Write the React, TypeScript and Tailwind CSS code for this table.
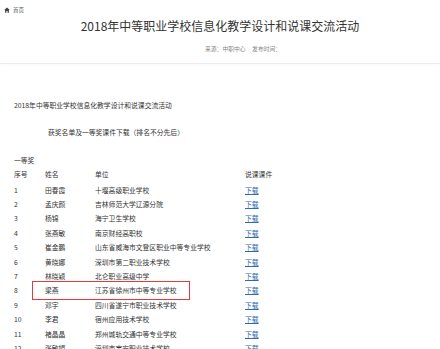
import React from "react";

const rows: [string, string, string][] = [
  ["1", "田春霞", "十堰高级职业学校"],
  ["2", "孟庆颜", "吉林师范大学辽源分院"],
  ["3", "杨锦", "海宁卫生学校"],
  ["4", "张燕敏", "南京财经高职校"],
  ["5", "崔金鹏", "山东省威海市文登区职业中等专业学校"],
  ["6", "黄晓娜", "深圳市第二职业技术学校"],
  ["7", "林晓颖", "北仑职业高级中学"],
  ["8", "梁燕", "江苏省徐州市中等专业学校"],
  ["9", "邓宇", "四川省遂宁市职业技术学校"],
  ["10", "李君", "宿州应用技术学校"],
  ["11", "褚晶晶", "郑州城轨交通中等专业学校"],
  ["12", "张敏娟", "深圳市宝安职业技术学校"],
];

export default function App() {
  return (
    <div
      className="w-[440px] h-[349px] overflow-hidden bg-white text-[#333]"
      style={{ fontFamily: '"Noto Sans CJK SC", "Noto Sans", sans-serif' }}
    >
      <div className="pt-[6px] pl-[4px] h-[14px] flex items-center gap-[3px] text-[5.5px] leading-[8px] text-[#555]">
        <svg width="6" height="6" viewBox="0 0 10 10">
          <path d="M5 0.8 L0.3 5 H1.8 V9.4 H4 V6.6 H6 V9.4 H8.2 V5 H9.7 Z" fill="#444" />
        </svg>
        <span>首页</span>
      </div>
      <div className="mt-[5px] text-center text-[12px] leading-[14px] text-[#333]">
        2018年中等职业学校信息化教学设计和说课交流活动
      </div>
      <div className="mt-[12px] pl-[205px] text-[5.8px] leading-[8px] text-[#888] whitespace-pre">
        来源：中职中心{"     "}发布时间：
      </div>
      <div className="mt-[10px] h-px bg-[#ececec] shadow-[0_1px_3px_rgba(0,0,0,0.06)]" />
      <div className="mt-[35.5px] pl-[14px] text-[6.8px] leading-[10px]">
        2018年中等职业学校信息化教学设计和说课交流活动
      </div>
      <div className="mt-[17px] pl-[48px] text-[6.8px] leading-[10px]">
        获奖名单及一等奖课件下载（排名不分先后）
      </div>
      <div className="mt-[18.5px] pl-[14px] text-[6.8px] leading-[10px]">一等奖</div>
      <div className="mt-[1.5px] pl-[14px] text-[6.8px]">
        <div className="grid grid-cols-[31px_50px_150px_1fr] h-[16px] items-center">
          <span>序号</span>
          <span>姓名</span>
          <span>单位</span>
          <span>说课课件</span>
        </div>
        {rows.map(([n, name, unit]) => (
          <div
            key={n}
            className="relative grid grid-cols-[31px_50px_150px_1fr] h-[14.4px] items-center"
          >
            <span>{n}</span>
            <span>{name}</span>
            <span className="whitespace-nowrap">{unit}</span>
            <span className="text-[#2f67b1] underline">下载</span>
            {n === "8" && (
              <div className="absolute left-[18px] top-[-2px] w-[158px] h-[19px] border-[1.5px] border-[#e53a3a]" />
            )}
          </div>
        ))}
      </div>
    </div>
  );
}
